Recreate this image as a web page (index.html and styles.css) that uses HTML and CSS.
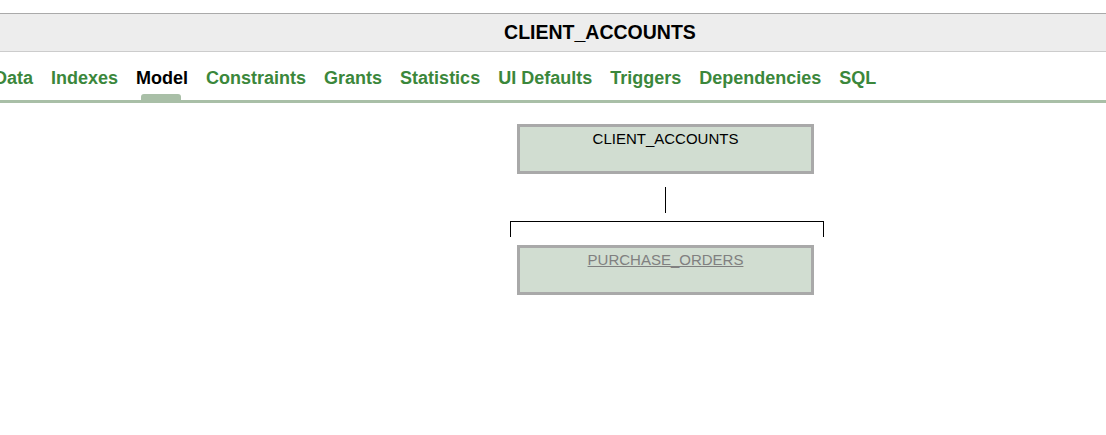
FILE: index.html
```html
<!DOCTYPE html>
<html>
<head>
<meta charset="utf-8">
<link rel="stylesheet" href="styles.css">
</head>
<body>
<header class="title-bar"><h1 class="title">CLIENT_ACCOUNTS</h1></header>
<nav class="tabs">
  <ul class="tab-list">
    <li class="tab">Data</li>
    <li class="tab">Indexes</li>
    <li class="tab tab-active">Model</li>
    <li class="tab">Constraints</li>
    <li class="tab">Grants</li>
    <li class="tab">Statistics</li>
    <li class="tab">UI Defaults</li>
    <li class="tab">Triggers</li>
    <li class="tab">Dependencies</li>
    <li class="tab">SQL</li>
  </ul>
</nav>
<main class="diagram">
  <div class="node">CLIENT_ACCOUNTS</div>
  <div class="stem"></div>
  <div class="bracket"></div>
  <div class="node"><a class="node-link" href="#">PURCHASE_ORDERS</a></div>
</main>
</body>
</html>
```
FILE: styles.css
```css
html, body {
  margin: 0;
  padding: 0;
  background: #ffffff;
  font-family: "Liberation Sans", Arial, sans-serif;
  overflow: hidden;
}
.title-bar {
  margin-top: 13px;
  height: 37px;
  background: #ededed;
  border-top: 1px solid #aaaaaa;
  border-bottom: 1px solid #cccccc;
  display: flex;
  align-items: center;
  justify-content: center;
}
.title {
  margin: 0;
  padding-left: 94px;
  font-size: 19.5px;
  font-weight: bold;
  color: #000;
}
.tabs {
  height: 48px;
  border-bottom: 3px solid #a9bfa7;
  overflow: hidden;
}
.tab-list {
  list-style: none;
  margin: 0 0 0 -15px;
  padding: 4px 0 0;
  box-sizing: border-box;
  display: flex;
  height: 100%;
}
.tab {
  position: relative;
  padding: 0 9px;
  display: flex;
  align-items: center;
  font-size: 18px;
  font-weight: bold;
  color: #3b873b;
  white-space: nowrap;
}
.tab-active {
  color: #000;
}
.tab-active::after {
  content: "";
  position: absolute;
  bottom: 0;
  left: 50%;
  width: 40px;
  margin-left: -21px;
  height: 6px;
  background: #a9bfa7;
  border-radius: 3px 3px 0 0;
}
.diagram {
  margin: 21px 0 0 510px;
  width: 314px;
  display: flex;
  flex-direction: column;
  align-items: flex-start;
}
.node {
  box-sizing: border-box;
  width: 297px;
  height: 50px;
  margin-left: 7px;
  background: #d1ddd1;
  border: 3px solid #a9a9a9;
  text-align: center;
  font-size: 15px;
  padding-top: 3px;
  color: #000;
}
.node-link {
  color: #808080;
  text-decoration: underline;
}
.stem {
  width: 1px;
  height: 26px;
  background: #000;
  margin: 13px 0 0 155px;
}
.bracket {
  align-self: stretch;
  height: 15px;
  border: 1px solid #000;
  border-bottom: none;
  margin-top: 8px;
}
.bracket + .node {
  margin-top: 8px;
}
```
